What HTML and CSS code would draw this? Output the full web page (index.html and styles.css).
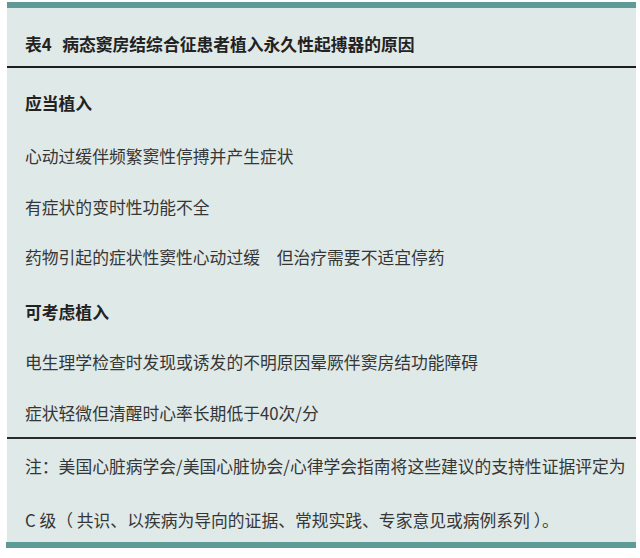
FILE: index.html
```html
<!DOCTYPE html>
<html lang="zh-CN">
<head>
<meta charset="utf-8">
<title>表4</title>
<link rel="stylesheet" href="styles.css">
</head>
<body>
<div class="panel">
  <div class="bar"></div>
  <div class="head"><span class="num">表4</span>病态窦房结综合征患者植入永久性起搏器的原因</div>
  <div class="body">
    <div class="sec first">应当植入</div>
    <div class="item gap1">心动过缓伴频繁窦性停搏并产生症状</div>
    <div class="item">有症状的变时性功能不全</div>
    <div class="item">药物引起的症状性窦性心动过缓　但治疗需要不适宜停药</div>
    <div class="sec">可考虑植入</div>
    <div class="item gap2">电生理学检查时发现或诱发的不明原因晕厥伴窦房结功能障碍</div>
    <div class="item">症状轻微但清醒时心率长期低于40次/分</div>
  </div>
  <div class="note">
    <div class="nline">注<span class="p">：</span>美国心脏病学会/美国心脏协会/心律学会指南将这些建议的支持性证据评定为</div>
    <div class="nline second">C 级<span class="p">（ </span>共识、以疾病为导向的证据、常规实践、专家意见或病例系列<span class="p"> ）。</span></div>
  </div>
  <div class="bar bottom"></div>
</div>
</body>
</html>
```

FILE: styles.css
```css
html, body {
  margin: 0;
  padding: 0;
  background: #ffffff;
}
body {
  font-family: "Noto Sans CJK SC", "Noto Sans", sans-serif;
  color: #363636;
}
.panel {
  margin: 2px 0 0 7px;
  width: 629px;
  background: #dfe9e8;
  display: flex;
  flex-direction: column;
}
.bar {
  height: 6px;
  background: #5f9b96;
}
.bar.bottom {
  margin-left: -1px;
  width: 630px;
}
.head {
  padding: 24px 18px 10px;
  line-height: 24px;
  font-size: 16.8px;
  font-weight: 700;
  color: #222;
  border-bottom: 2px solid #1e1e1e;
  white-space: nowrap;
}
.head .num {
  margin-right: 10.5px;
}
.body {
  padding: 23px 18px 12px;
  display: flex;
  flex-direction: column;
  border-bottom: 2px solid #2a2a2a;
}
.sec {
  line-height: 24px;
  font-size: 16.8px;
  font-weight: 700;
  color: #222;
  margin-top: 31px;
}
.sec.first {
  margin-top: 0;
}
.item {
  line-height: 24px;
  font-size: 16.8px;
  margin-top: 26.5px;
  white-space: nowrap;
}
.item.gap1 {
  margin-top: 29px;
}
.item.gap2 {
  margin-top: 26px;
}
.note {
  padding: 15px 18px 10px;
  display: flex;
  flex-direction: column;
}
.nline {
  line-height: 24px;
  font-size: 16.8px;
  white-space: pre;
}
.nline .p {
  font-family: "Noto Sans CJK TC", "Noto Sans CJK SC", sans-serif;
}
.nline.second {
  margin-top: 30px;
}
```
